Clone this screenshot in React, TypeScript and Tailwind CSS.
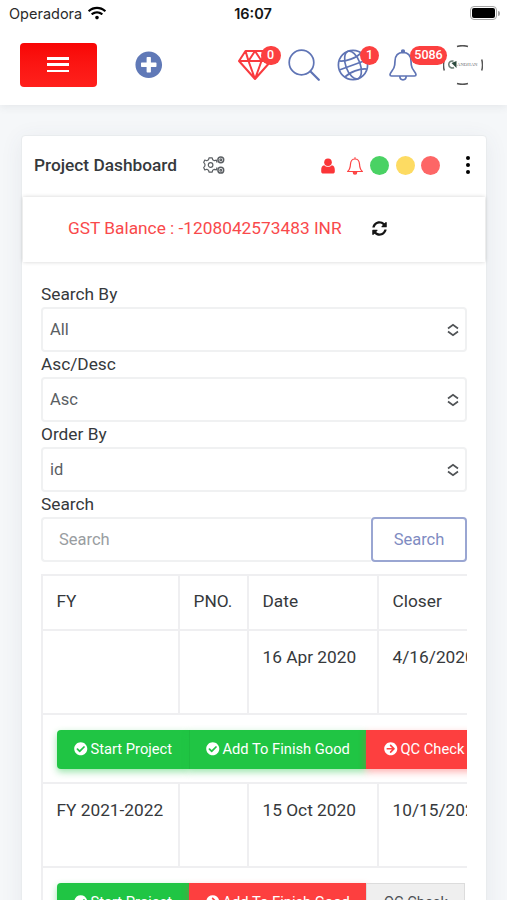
import React from "react";
import {
  FaArrowCircleRight,
  FaCheckCircle,
  FaPlusCircle,
  FaSyncAlt,
  FaWifi,
} from "react-icons/fa";

interface FieldProps {
  label: string;
  value: string;
}

interface ActionProps {
  label: string;
  className: string;
  icon?: React.ReactNode;
}

interface Project {
  fy: string;
  pno: string;
  date: string;
  closer: string;
  actions: ActionProps[];
}

const green =
  "w-[132px] bg-[#20c544] pl-[17px] text-white shadow-[0_3px_7px_rgba(32,197,68,0.45)]";
const greenWide =
  "w-[177px] border-l border-[#1dbb3f] bg-[#20c544] pl-4 text-white shadow-[0_3px_7px_rgba(32,197,68,0.45)]";
const redWide =
  "w-[177px] bg-[#fd3f3f] pl-[17px] text-white shadow-[0_3px_7px_rgba(253,63,63,0.4)]";
const red =
  "w-[133px] bg-[#fd3f3f] pl-[18px] text-white shadow-[0_3px_7px_rgba(253,63,63,0.4)]";
const grey =
  "w-[99px] border border-[#dcdcdc] bg-[#efefef] pl-[17px] text-[#4b4f54]";

const projects: Project[] = [
  {
    fy: "",
    pno: "",
    date: "16 Apr 2020",
    closer: "4/16/2020",
    actions: [
      { label: "Start Project", className: green, icon: <FaCheckCircle /> },
      { label: "Add To Finish Good", className: greenWide, icon: <FaCheckCircle /> },
      { label: "QC Check", className: red, icon: <FaArrowCircleRight /> },
    ],
  },
  {
    fy: "FY 2021-2022",
    pno: "",
    date: "15 Oct 2020",
    closer: "10/15/2020",
    actions: [
      { label: "Start Project", className: green, icon: <FaCheckCircle /> },
      { label: "Add To Finish Good", className: redWide, icon: <FaArrowCircleRight /> },
      { label: "QC Check", className: grey },
    ],
  },
];

const DiamondIcon = () => (
  <svg width="36" height="32" viewBox="0 0 36 32" fill="none" stroke="#f93b3f" strokeWidth="2" strokeLinejoin="round">
    <path d="M8.500 2h19l6.500 10L18 30 2 12zM2 12h32M8.500 2l3 10L18 2l6.500 10 3-10M11.500 12 18 30l6.500-18" />
  </svg>
);

const SearchIcon = () => (
  <svg width="32" height="32" viewBox="0 0 32 32" fill="none" stroke="#5f74b5" strokeWidth="1.7" strokeLinecap="round">
    <circle cx="13.500" cy="13.500" r="12.300" />
    <path d="m22.500 22.500 8.300 8.300" strokeWidth="2.2" />
  </svg>
);

const GlobeIcon = () => (
  <svg width="32" height="32" viewBox="0 0 32 32" fill="none" stroke="#5f74b5" strokeWidth="1.7">
    <circle cx="16" cy="16" r="14.600" />
    <g transform="rotate(-20 16 16)">
      <ellipse cx="16" cy="16" rx="7.200" ry="14.600" />
      <path d="M1.400 16h29.200M4.500 7.500c6 3 17 3 23 0M4.500 24.500c6-3 17-3 23 0" />
    </g>
  </svg>
);

const BellIcon = () => (
  <svg width="28" height="32" viewBox="0 0 28 32" fill="none" stroke="#5f74b5" strokeWidth="1.7" strokeLinejoin="round">
    <circle cx="14" cy="2.300" r="1.300" fill="#5f74b5" />
    <path d="M14 3.500c-5 0-7.800 3.500-8 8.500l-.3 4C5.300 21 1 23 1 25.700c0 .9.600 1.300 1.500 1.300h23c.9 0 1.500-.4 1.500-1.300C27 23 22.700 21 22.300 16l-.3-4c-.2-5-3-8.500-8-8.500zM10.800 27c0 2.200 1.300 3.800 3.200 3.800s3.200-1.600 3.200-3.800" />
  </svg>
);

const SmallBellIcon = () => (
  <svg width="16" height="18" viewBox="0 0 16 18" fill="none" stroke="#fd4343" strokeWidth="1.2" strokeLinejoin="round">
    <path d="M8 .3v1.500M8 2c-3 0-4.300 2.200-4.500 5-.2 4-1 6-2.900 7.500h14.800c-1.900-1.500-2.700-3.500-2.900-7.500-.2-2.800-1.500-5-4.500-5z" />
    <path d="M6.300 15.200a1.700 1.900 0 0 0 3.400 0z" fill="#fd4343" />
  </svg>
);

const UserIcon = () => (
  <svg width="14" height="16" viewBox="0 0 14 16" fill="#fb3538">
    <circle cx="7" cy="4.200" r="3.800" />
    <path d="M3.200 7.200C1 7.400.2 9.500.2 12v1.500c0 1.400.9 2 2.100 2h9.400c1.200 0 2.100-.6 2.100-2V12c0-2.500-.8-4.600-3-4.800-2 2-5.600 2-7.600 0z" />
  </svg>
);

const GearsIcon = () => (
  <svg width="22" height="18" viewBox="0 0 22 18" fill="none" stroke="#5b5f63" strokeWidth="1.2" strokeLinejoin="round">
    <path d="m14 6.500-.6-2.300-2 .5-1.700-.9L9.200 1.800H6l-.5 2-1.700.9-2-.7L.7 6.500 1.900 8v2L.7 11.500 1.800 14l2-.7 1.700.9.5 2h3.200l.5-2 1.700-.9 2 .5.600-2.300" />
    <circle cx="7.600" cy="9" r="2.300" />
    <circle cx="17.800" cy="3.800" r="2.900" strokeWidth="1.500" />
    <circle cx="17.800" cy="3.800" r=".9" />
    <circle cx="17.800" cy="14.200" r="2.900" strokeWidth="1.500" />
    <circle cx="17.800" cy="14.200" r=".9" />
  </svg>
);

const SelectArrows = () => (
  <svg width="12" height="14" viewBox="0 0 12 14" fill="none" stroke="#505356" strokeWidth="1.700">
    <path d="M1 5.500 6 1.700l5 3.800M1 8.500l5 3.800 5-3.800" />
  </svg>
);

const AvatarLogo = () => (
  <svg width="40" height="40" viewBox="0 0 40 40">
    <path d="M14 1.500a19 19 0 0 1 11 0M14 38.500a19 19 0 0 0 11 0M1.300 14.500a19 19 0 0 0 0 11M38.700 14.500a19 19 0 0 1 0 11" fill="none" stroke="#555" strokeWidth="1.500" />
    <path d="M10.500 16.200a3.500 3.500 0 1 0 .5 6.300" fill="none" stroke="#6d7f78" strokeWidth="1.600" />
    <path d="m8.500 18 5-2v7z" fill="#2c4a3e" />
    <text x="14" y="21.200" fontSize="5" textLength="20.500" lengthAdjust="spacingAndGlyphs" fill="#6b7073" fontFamily="Liberation Serif, serif">ANDHAN</text>
  </svg>
);

const Badge = ({ text, className }: { text: string; className: string }) => (
  <span className={`absolute flex h-[19px] items-center justify-center rounded-full bg-[#fc4040] text-[12.500px] leading-none font-medium text-white ${className}`}>
    {text}
  </span>
);

const SelectField = ({ label, value }: FieldProps) => (
  <div className="h-[69.800px]">
    <div className="h-[25.300px] leading-[25px]">{label}</div>
    <div className="flex h-[45px] items-center justify-between rounded-[4px] border-2 border-[#f0f1f2] pt-px pr-[6px] pl-[7px] text-[16.500px] text-[#5a5e63]">
      <span className="pt-px">{value}</span>
      <SelectArrows />
    </div>
  </div>
);

const Action = ({ label, className, icon }: ActionProps) => (
  <button className={`flex h-[39px] shrink-0 items-center gap-[3px] text-[14.700px] whitespace-nowrap ${className}`}>
    {icon && <span className="text-[13.500px]">{icon}</span>}
    {label}
  </button>
);

const cell = "border-r-2 border-b-2 border-[#efeff1] text-left align-top font-normal whitespace-nowrap";

export default function App() {
  return (
    <div className="h-[900px] w-[507px] overflow-hidden bg-[#f5f7f9] font-['Roboto',sans-serif] text-[17.300px] text-[#36393c]">
      <header className="relative h-[105px] bg-white shadow-[0_1px_9px_rgba(60,70,80,0.1)]">
        <div className="grid h-7 grid-cols-3 items-center pr-[7px] pl-[9px] font-['Inter',sans-serif] text-[14.500px] text-[#2a2a2a]">
          <div className="flex items-center gap-[6px]">
            Operadora
            <FaWifi className="mb-[2px] text-[18px] text-black" />
          </div>
          <div className="pr-[3px] text-center font-semibold text-[#151515]">16:07</div>
          <div className="mb-[2px] flex items-center justify-end gap-px">
            <div className="h-[14px] w-[27px] rounded-[4px] border-[1.500px] border-[#a5a5a5] p-px">
              <div className="h-full rounded-[2px] bg-black" />
            </div>
            <div className="h-[5px] w-[2px] rounded-r-full bg-[#a5a5a5]" />
          </div>
        </div>
        <div className="flex h-[74px] items-center pl-5">
          <button className="flex h-11 w-[76.500px] items-center justify-center rounded-[4px] bg-linear-to-b from-[#f80505] to-[#ff201c]">
            <span className="mb-px flex h-[15px] w-[22px] flex-col justify-between">
              <span className="h-[2.500px] bg-white" />
              <span className="h-[2.500px] bg-white" />
              <span className="h-[2.500px] bg-white" />
            </span>
          </button>
          <FaPlusCircle className="ml-[38.500px] text-[27.500px] text-[#6079b7]" />
          <div className="relative ml-[74px]">
            <DiamondIcon />
            <Badge text="0" className="-top-[3px] left-[24px] w-[20px]" />
          </div>
          <div className="ml-[15.500px]">
            <SearchIcon />
          </div>
          <div className="relative ml-[17px]">
            <GlobeIcon />
            <Badge text="1" className="-top-[3px] left-[23px] w-[19px]" />
          </div>
          <div className="relative ml-[20px]">
            <BellIcon />
            <Badge text="5086" className="-top-[3px] left-[21px] w-[37px]" />
          </div>
          <div className="ml-[25.500px]">
            <AvatarLogo />
          </div>
        </div>
      </header>

      <main className="mt-[30px] mr-5 ml-[21px] h-[800px] rounded-[4px] border border-[#e9ecee] bg-white shadow-[0_4px_22px_rgba(60,75,100,0.08)]">
        <div className="flex h-[61px] items-center pb-[3px] pl-3">
          <h1 className="w-[169px] pt-px font-medium">Project Dashboard</h1>
          <div className="pb-px">
            <GearsIcon />
          </div>
          <div className="ml-[96px] flex items-center pt-px">
            <UserIcon />
            <span className="mr-[7px] ml-3">
              <SmallBellIcon />
            </span>
            <div className="flex gap-[6.500px]">
              <span className="size-[19px] rounded-full bg-[#4ad264]" />
              <span className="size-[19px] rounded-full bg-[#fddb62]" />
              <span className="size-[19px] rounded-full bg-[#fd6666]" />
            </div>
          </div>
          <div className="mb-px ml-[26px] flex flex-col gap-[3px]">
            <span className="size-1 rounded-full bg-black" />
            <span className="size-1 rounded-full bg-black" />
            <span className="size-1 rounded-full bg-black" />
          </div>
        </div>
        <div className="mx-px flex h-[65px] items-center bg-white pb-[2px] pl-[45px] shadow-[0_0_4px_rgba(0,0,0,0.18)]">
          <span className="w-[304px] text-[#f9494b]">GST Balance : -1208042573483 INR</span>
          <FaSyncAlt className="text-[15px] text-[#151515]" />
        </div>

        <div className="mx-[19px] pt-5">
          <SelectField label="Search By" value="All" />
          <SelectField label="Asc/Desc" value="Asc" />
          <SelectField label="Order By" value="id" />
          <div className="h-[25.300px] leading-[26px]">Search</div>
          <div className="flex h-[45px] text-[16.500px]">
            <div className="flex flex-1 items-center rounded-l-[4px] border-2 border-r-0 border-[#f0f1f2] pt-[2px] pl-4 text-[#999da1]">
              Search
            </div>
            <button className="w-[96px] rounded-[4px] border-2 border-[#9aa6d2] pt-[2px] text-[#7f8cc2]">
              Search
            </button>
          </div>

          <div className="mt-3 overflow-hidden">
            <table className="w-[600px] table-fixed border-separate border-spacing-0 border-t-2 border-l-2 border-[#efeff1]">
              <colgroup>
                <col className="w-[137px]" />
                <col className="w-[69px]" />
                <col className="w-[130px]" />
                <col />
              </colgroup>
              <thead>
                <tr className="h-[55px]">
                  <th className={`${cell} pt-[13px] pl-[13.500px]`}>FY</th>
                  <th className={`${cell} pt-[13px] pl-[13.500px]`}>PNO.</th>
                  <th className={`${cell} pt-[13px] pl-[13.500px]`}>Date</th>
                  <th className={`${cell} pt-[13px] pl-[13.500px]`}>Closer</th>
                </tr>
              </thead>
              <tbody>
                {projects.map((project) => (
                  <React.Fragment key={project.date}>
                    <tr className="h-[84px]">
                      <td className={`${cell} pt-[14px] pl-[13.500px]`}>{project.fy}</td>
                      <td className={`${cell} pt-[14px] pl-[13.500px]`}>{project.pno}</td>
                      <td className={`${cell} pt-[14px] pl-[13.500px]`}>{project.date}</td>
                      <td className={`${cell} pt-[14px] pl-[13.500px]`}>{project.closer}</td>
                    </tr>
                    <tr className="h-[69px]">
                      <td colSpan={4} className={`${cell} pt-[15px] pl-[14px]`}>
                        <div className="flex w-max *:first:rounded-l-[4px]">
                          {project.actions.map((action) => (
                            <Action key={action.label} {...action} />
                          ))}
                        </div>
                      </td>
                    </tr>
                  </React.Fragment>
                ))}
              </tbody>
            </table>
          </div>
        </div>
      </main>
    </div>
  );
}
